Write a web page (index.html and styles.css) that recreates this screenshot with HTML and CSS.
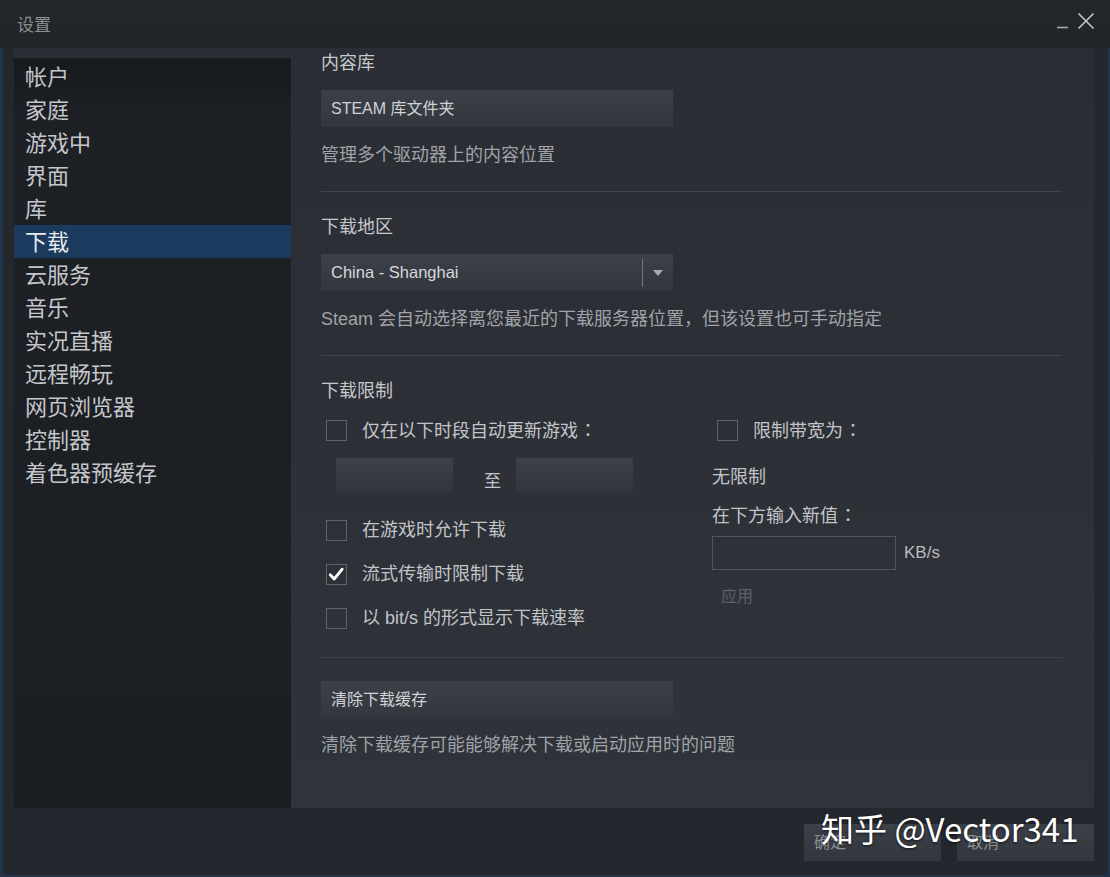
FILE: index.html
```html
<!DOCTYPE html>
<html lang="zh-CN">
<head>
<meta charset="utf-8">
<title>设置</title>
<link rel="stylesheet" href="styles.css">
</head>
<body>
<div class="window">
  <div class="titlebar">
    <span class="title">设置</span>
    <div class="controls">
      <svg class="ico-min" width="15" height="18" viewBox="0 0 15 18"><line x1="2" y1="15.5" x2="13" y2="15.5" stroke="#a6a9ad" stroke-width="1.6"/></svg>
      <svg class="ico-close" width="18" height="18" viewBox="0 0 18 18"><path d="M1.5 1.5 L16.5 16.5 M16.5 1.5 L1.5 16.5" stroke="#c3c5c8" stroke-width="1.6" fill="none"/></svg>
    </div>
  </div>

  <div class="main">
    <nav class="sidebar">
      <div class="nav-item">帐户</div>
      <div class="nav-item">家庭</div>
      <div class="nav-item">游戏中</div>
      <div class="nav-item">界面</div>
      <div class="nav-item">库</div>
      <div class="nav-item active">下载</div>
      <div class="nav-item">云服务</div>
      <div class="nav-item">音乐</div>
      <div class="nav-item">实况直播</div>
      <div class="nav-item">远程畅玩</div>
      <div class="nav-item">网页浏览器</div>
      <div class="nav-item">控制器</div>
      <div class="nav-item">着色器预缓存</div>
    </nav>

    <section class="content">
      <div class="heading">内容库</div>
      <div class="btn-wide control">STEAM 库文件夹</div>
      <div class="desc">管理多个驱动器上的内容位置</div>
      <div class="divider"></div>

      <div class="heading after-divider">下载地区</div>
      <div class="dropdown control">
        <span class="dd-text">China - Shanghai</span>
        <span class="dd-sep"></span>
        <span class="dd-arrow"><svg width="10" height="6" viewBox="0 0 10 6"><path d="M0 0 L10 0 L5 6 Z" fill="#a7aaae"/></svg></span>
      </div>
      <div class="desc desc-2">Steam 会自动选择离您最近的下载服务器位置，但该设置也可手动指定</div>
      <div class="divider"></div>

      <div class="heading after-divider">下载限制</div>
      <div class="limits">
        <div class="col-left">
          <div class="cb-row">
            <span class="cb"></span>
            <span class="cb-label">仅在以下时段自动更新游戏<span class="colon">：</span></span>
          </div>
          <div class="time-row">
            <span class="time-input"></span>
            <span class="to">至</span>
            <span class="time-input"></span>
          </div>
          <div class="cb-row first-gap">
            <span class="cb"></span>
            <span class="cb-label">在游戏时允许下载</span>
          </div>
          <div class="cb-row gap">
            <span class="cb checked"><svg width="19" height="19" viewBox="0 0 19 19"><path d="M3.2 9.8 L7.2 14 L15.2 4.2" stroke="#ffffff" stroke-width="2.8" fill="none" stroke-linecap="round" stroke-linejoin="round"/></svg></span>
            <span class="cb-label">流式传输时限制下载</span>
          </div>
          <div class="cb-row gap">
            <span class="cb"></span>
            <span class="cb-label">以 bit/s 的形式显示下载速率</span>
          </div>
        </div>
        <div class="col-right">
          <div class="cb-row">
            <span class="cb"></span>
            <span class="cb-label">限制带宽为<span class="colon">：</span></span>
          </div>
          <div class="plain unlimited">无限制</div>
          <div class="plain enter">在下方输入新值<span class="colon">：</span></div>
          <div class="rate-row">
            <span class="rate-input"></span>
            <span class="unit">KB/s</span>
          </div>
          <div class="apply">应用</div>
        </div>
      </div>
      <div class="divider divider-3"></div>

      <div class="btn-wide clear">清除下载缓存</div>
      <div class="desc desc-3">清除下载缓存可能能够解决下载或启动应用时的问题</div>
    </section>
  </div>

  <div class="footer">
    <div class="btn-foot">确定</div>
    <div class="btn-foot">取消</div>
  </div>

  <div class="watermark">知乎 @Vector341</div>
</div>
</body>
</html>
```

FILE: styles.css
```css
* { box-sizing: border-box; }

html, body {
  margin: 0;
  padding: 0;
  background: #24272d;
}

body {
  font-family: "Liberation Sans", "Noto Sans CJK SC", sans-serif;
  width: 1110px;
  height: 877px;
  overflow: hidden;
}

.window {
  position: relative;
  width: 1110px;
  height: 877px;
  background: #24272d;
  box-shadow: inset 0 0 0 2px #22344a, inset 3px 0 0 #22344a;
  display: flex;
  flex-direction: column;
}

/* title bar */
.titlebar {
  height: 48px;
  display: flex;
  align-items: center;
  padding: 0 15px 0 17px;
  background: linear-gradient(#23262b, #212429);
}

.title {
  font-size: 17px;
  color: #8b8e93;
  line-height: 24px;
  padding-top: 3px;
}

.controls {
  margin-left: auto;
  align-self: flex-start;
  padding-top: 12px;
  display: flex;
  gap: 7px;
}

.ico-min, .ico-close { display: block; }

/* main */
.main {
  height: 760px;
  margin: 0 16px 0 14px;
  display: flex;
}

.sidebar {
  width: 277px;
  flex: none;
  padding-top: 12px;
  background: linear-gradient(to bottom, #2b2e34 0, #2b2e34 9px, #16191d 11px, #1d2025 70px, #1b1e23 100%);
}

.nav-item {
  height: 33px;
  line-height: 30px;
  padding: 3px 0 0 11px;
  font-size: 22px;
  color: #c4c6ca;
}

.nav-item.active {
  background: #1b3a5d;
  color: #e8eaec;
}

.content {
  flex: 1;
  padding: 3px 32px 0 30px;
  background: linear-gradient(to bottom, #2a2d33, #2f333a);
}

.heading {
  font-size: 18px;
  line-height: 24px;
  color: #c6c8cc;
}

.heading.after-divider { margin-top: 23px; }

.control { margin-top: 15px; }

.btn-wide {
  width: 352px;
  height: 37px;
  line-height: 37px;
  padding-left: 10px;
  font-size: 16px;
  color: #d0d2d5;
  background: linear-gradient(to bottom, #3c4149, #32363d);
}

.desc {
  margin-top: 16px;
  font-size: 18px;
  line-height: 24px;
  color: #a0a3a8;
}

.divider {
  margin-top: 24px;
  height: 1px;
  background: #3f444b;
}

/* dropdown */
.dropdown {
  width: 352px;
  height: 37px;
  display: flex;
  align-items: center;
  background: linear-gradient(to bottom, #3c4149, #32363d);
}

.dd-text {
  flex: 1;
  padding-left: 10px;
  font-size: 16.5px;
  color: #d6d8db;
}

.dd-sep {
  width: 1px;
  height: 28px;
  background: #72767d;
}

.dd-arrow {
  width: 30px;
  display: flex;
  justify-content: center;
  align-items: center;
}

.dd-arrow svg { display: block; }

/* limits */
.limits {
  margin-top: 15px;
  display: grid;
  grid-template-columns: 391px 1fr;
}

.cb-row {
  height: 24px;
  display: flex;
  align-items: center;
}

.cb-row.first-gap { margin-top: 25px; }
.cb-row.gap { margin-top: 20px; }

.cb {
  width: 21px;
  height: 21px;
  margin-left: 5px;
  border: 1px solid #5e6269;
  display: flex;
  align-items: center;
  justify-content: center;
  flex: none;
}

.cb svg { display: block; }

.cb-label {
  margin-left: 15px;
  font-size: 18px;
  line-height: 24px;
  color: #c2c4c8;
}

.colon {
  display: inline-block;
  width: 1em;
  padding-left: 0.05em;
  text-align: center;
  font-family: "Noto Sans CJK TC", "Noto Sans CJK SC", sans-serif;
}

.time-row {
  margin-top: 16px;
  margin-left: 15px;
  display: flex;
  align-items: center;
}

.time-input {
  width: 117px;
  height: 35px;
  background: linear-gradient(to bottom, #3d424a, #30343b);
}

.to {
  margin: 0 15px 0 31px;
  padding-top: 7px;
  font-size: 17px;
  color: #c4c6ca;
}

.plain {
  font-size: 18px;
  line-height: 24px;
  color: #c2c4c8;
}

.unlimited { margin-top: 23px; }
.enter { margin-top: 13px; }

.rate-row {
  margin-top: 8px;
  display: flex;
  align-items: center;
}

.rate-input {
  width: 184px;
  height: 34px;
  border: 1px solid #50555d;
  background: #2d3138;
}

.unit {
  margin-left: 8px;
  font-size: 17px;
  color: #b9bbbf;
}

.apply {
  margin-top: 9px;
  margin-left: -2px;
  width: 105px;
  height: 35px;
  line-height: 35px;
  padding-left: 11px;
  font-size: 16px;
  color: #5c6067;
  background: #2f3339;
}

.divider-3 { margin-top: 27px; }

.clear { margin-top: 23px; }

.desc-3 { margin-top: 15px; }

/* footer */
.footer {
  flex: 1;
  display: flex;
  justify-content: flex-end;
  gap: 16px;
  padding: 16px 16px 0 0;
}

.btn-foot {
  width: 137px;
  height: 37px;
  line-height: 37px;
  padding-left: 10px;
  font-size: 16px;
  color: #8f9297;
  background: linear-gradient(to bottom, #3c4048, #32363d);
}

/* watermark overlay */
.watermark {
  position: absolute;
  left: 821px;
  top: 806px;
  font-family: "Noto Sans CJK SC", sans-serif;
  font-size: 33px;
  line-height: 44px;
  color: #ffffff;
  text-shadow: 0 1px 3px rgba(0, 0, 0, 0.7);
  white-space: nowrap;
}
```
